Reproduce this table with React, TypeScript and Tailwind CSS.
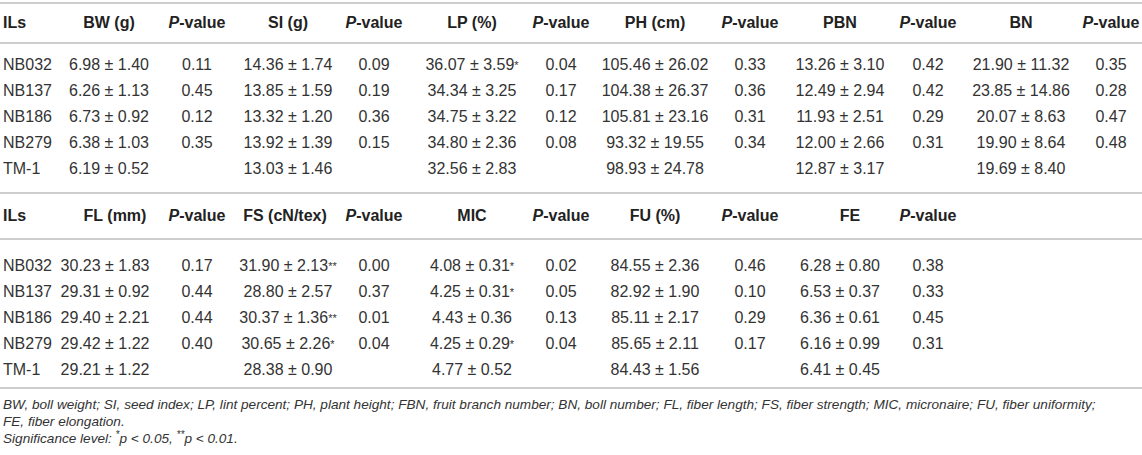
import React from "react";

const COLS =
  "grid grid-cols-[66px_86px_90px_92px_80px_116px_62px_126px_64px_116px_60px_126px_54px_4px]";

const top = {
  head: ["BW (g)", "P-value", "SI (g)", "P-value", "LP (%)", "P-value", "PH (cm)", "P-value", "PBN", "P-value", "BN", "P-value"],
  rows: [
    ["NB032", "6.98 ± 1.40", "0.11", "14.36 ± 1.74", "0.09", "36.07 ± 3.59|*", "0.04", "105.46 ± 26.02", "0.33", "13.26 ± 3.10", "0.42", "21.90 ± 11.32", "0.35"],
    ["NB137", "6.26 ± 1.13", "0.45", "13.85 ± 1.59", "0.19", "34.34 ± 3.25", "0.17", "104.38 ± 26.37", "0.36", "12.49 ± 2.94", "0.42", "23.85 ± 14.86", "0.28"],
    ["NB186", "6.73 ± 0.92", "0.12", "13.32 ± 1.20", "0.36", "34.75 ± 3.22", "0.12", "105.81 ± 23.16", "0.31", "11.93 ± 2.51", "0.29", "20.07 ± 8.63", "0.47"],
    ["NB279", "6.38 ± 1.03", "0.35", "13.92 ± 1.39", "0.15", "34.80 ± 2.36", "0.08", "93.32 ± 19.55", "0.34", "12.00 ± 2.66", "0.31", "19.90 ± 8.64", "0.48"],
    ["TM-1", "6.19 ± 0.52", "", "13.03 ± 1.46", "", "32.56 ± 2.83", "", "98.93 ± 24.78", "", "12.87 ± 3.17", "", "19.69 ± 8.40", ""],
  ],
};

const bottom = {
  head: ["FL (mm)", "P-value", "FS (cN/tex)", "P-value", "MIC", "P-value", "FU (%)", "P-value", "FE", "P-value", "", ""],
  rows: [
    ["NB032", "30.23 ± 1.83", "0.17", "31.90 ± 2.13|**", "0.00", "4.08 ± 0.31|*", "0.02", "84.55 ± 2.36", "0.46", "6.28 ± 0.80", "0.38", "", ""],
    ["NB137", "29.31 ± 0.92", "0.44", "28.80 ± 2.57", "0.37", "4.25 ± 0.31|*", "0.05", "82.92 ± 1.90", "0.10", "6.53 ± 0.37", "0.33", "", ""],
    ["NB186", "29.40 ± 2.21", "0.44", "30.37 ± 1.36|**", "0.01", "4.43 ± 0.36", "0.13", "85.11 ± 2.17", "0.29", "6.36 ± 0.61", "0.45", "", ""],
    ["NB279", "29.42 ± 1.22", "0.40", "30.65 ± 2.26|*", "0.04", "4.25 ± 0.29|*", "0.04", "85.65 ± 2.11", "0.17", "6.16 ± 0.99", "0.31", "", ""],
    ["TM-1", "29.21 ± 1.22", "", "28.38 ± 0.90", "", "4.77 ± 0.52", "", "84.43 ± 1.56", "", "6.41 ± 0.45", "", "", ""],
  ],
};

function Rule() {
  return <div className="h-[2px] bg-[#cdcdcd]" />;
}

function HeadText({ t }: { t: string }) {
  if (t === "P-value")
    return (
      <span>
        <i>P</i>-value
      </span>
    );
  return <span>{t}</span>;
}

function Value({ t }: { t: string }) {
  const [num, star] = t.split("|");
  return (
    <span>
      {num}
      {star && <sup className="text-[11px] relative -top-[1px]">{star}</sup>}
    </span>
  );
}

function Table({
  head,
  rows,
  headH,
  padTop,
  padBottom,
  headShift,
  firstShift,
}: {
  head: string[];
  rows: string[][];
  headH: string;
  padTop: string;
  padBottom: string;
  headShift: Record<number, string>;
  firstShift?: string;
}) {
  return (
    <div>
      <div className={`${COLS} ${headH} items-center font-bold text-[#222]`}>
        <div className="pl-[3px]">ILs</div>
        {head.map((h, i) => (
          <div key={i} className={`flex justify-center whitespace-nowrap ${headShift[i] ?? ""}`}>
            {h && <HeadText t={h} />}
          </div>
        ))}
        <div />
      </div>
      <Rule />
      <div className={`${padTop} ${padBottom}`}>
        {rows.map((r, ri) => (
          <div key={ri} className={`${COLS} h-[26px] items-center text-[#333]`}>
            <div className="pl-[3px]">{r[0]}</div>
            {r.slice(1).map((c, ci) => (
              <div
                key={ci}
                className={`flex justify-center whitespace-nowrap ${ci === 0 && firstShift ? firstShift : ""}`}
              >
                {c && <Value t={c} />}
              </div>
            ))}
            <div />
          </div>
        ))}
      </div>
      <Rule />
    </div>
  );
}

export default function App() {
  return (
    <div className="w-[1142px] h-[455px] overflow-hidden bg-white font-['Liberation_Sans',Arial,sans-serif] text-[16px] leading-none">
      <div className="pt-[2px]">
        <Rule />
        <Table
          head={top.head}
          rows={top.rows}
          headH="h-[38px]"
          padTop="pt-[8px]"
          padBottom="pb-[10px]"
          headShift={{}}
        />
        <Table
          head={bottom.head}
          rows={bottom.rows}
          headH="h-[44px]"
          padTop="pt-[13px]"
          padBottom="pb-[4px]"
          headShift={{ 0: "pl-3", 2: "pr-[6px]", 8: "pl-5" }}
          firstShift="pr-2"
        />
        <div className="pt-[7px] pl-[3px] italic text-[13.6px] leading-[17px] text-[#333]">
          <p>
            BW, boll weight; SI, seed index; LP, lint percent; PH, plant height; FBN, fruit branch number; BN, boll
            number; FL, fiber length; FS, fiber strength; MIC, micronaire; FU, fiber uniformity;
          </p>
          <p>FE, fiber elongation.</p>
          <p>
            Significance level: <sup className="text-[10px]">*</sup>p &lt; 0.05, <sup className="text-[10px]">**</sup>p
            &lt; 0.01.
          </p>
        </div>
      </div>
    </div>
  );
}
